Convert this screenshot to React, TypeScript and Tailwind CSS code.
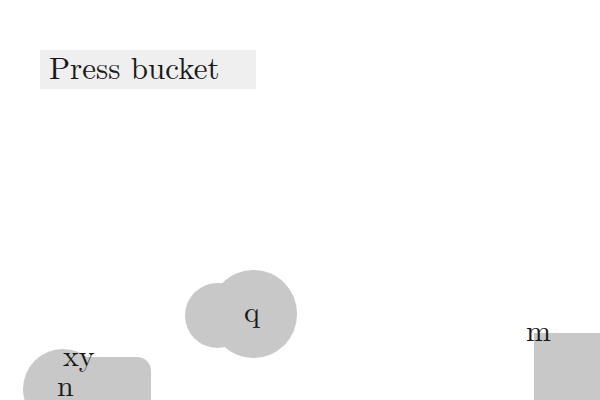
export default function App() {
  return (
    <div className="relative h-[400px] w-[600px] overflow-hidden bg-white font-['Latin_Modern_Roman','Liberation_Serif',serif] text-[#1a1a1a]">
      <div className="ml-[40px] mt-[50px] flex h-[39px] w-[216px] items-start bg-[#efefef] pl-[9px] pt-[1px] text-[31px] leading-none">
        Press bucket
      </div>

      {/* q cluster */}
      <div className="absolute left-[185px] top-[270px] h-[88px] w-[112px]">
        <div className="absolute left-0 top-[13px] h-[65px] w-[65px] rounded-full bg-[#c8c8c8]" />
        <div className="absolute left-[25px] top-0 flex h-[88px] w-[87px] items-start justify-start rounded-full bg-[#c8c8c8] pl-[34px] pt-[25px]">
          <span className="text-[30px] leading-none">q</span>
        </div>
      </div>

      {/* bottom-left cluster */}
      <div className="absolute left-[23px] top-[339px] h-[70px] w-[130px]">
        <div className="absolute left-0 top-[10px] h-[80px] w-[80px] rounded-full bg-[#c8c8c8]" />
        <div className="absolute left-[39px] top-[18px] h-[60px] w-[89px] rounded-tl-[20px] rounded-tr-[14px] bg-[#c8c8c8]" />
        <div className="relative flex flex-col items-start pl-[34px] text-[30px] leading-[30px]">
          <span className="ml-[6px]">xy</span>
          <span>n</span>
        </div>
      </div>

      {/* right block */}
      <div className="absolute left-[534px] top-[333px] h-[67px] w-[66px] bg-[#c8c8c8]" />
      <span className="absolute left-[526px] top-[314px] text-[30px] leading-none">m</span>
    </div>
  );
}
